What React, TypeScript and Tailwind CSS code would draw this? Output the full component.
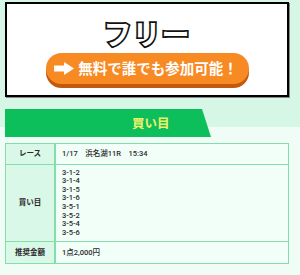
export default function App() {
  const picks = ["3-1-2", "3-1-4", "3-1-5", "3-1-6", "3-5-1", "3-5-2", "3-5-4", "3-5-6"];

  return (
    <div className="h-[275px] w-[300px] overflow-hidden bg-[linear-gradient(to_bottom,#d6f7e5_127px,#effdf6_127px)] font-['Roboto','Noto_Sans_CJK_JP',sans-serif] text-[#333]">
      {/* free plan banner */}
      <div className="ml-[5px] mt-[2px] flex h-[95px] w-[284px] flex-col items-center border-2 border-black bg-white shadow-[1px_1px_0_#888]">
        <p className="mt-[12px] font-['Noto_Sans_CJK_JP',sans-serif] text-[28px] font-bold leading-[34px] tracking-[1px] text-white [-webkit-text-stroke:3.5px_#111] [paint-order:stroke_fill]">
          フリー
        </p>
        <a
          href="#join"
          className="mt-[3px] flex h-[31px] w-[203px] items-center justify-center gap-[4px] rounded-full bg-[#f78a22] pr-[2px] shadow-[0_4px_0_#c2590f] font-['Noto_Sans_CJK_JP',sans-serif] text-[14.5px] font-bold leading-none text-white"
        >
          <svg width="20" height="13" viewBox="0 0 20 13" className="shrink-0">
            <path d="M0 3.5h10V0l10 6.5L10 13V9.5H0z" fill="#fff" />
          </svg>
          無料で誰でも参加可能！
        </a>
      </div>

      {/* section heading */}
      <div className="ml-[5px] mt-[12px] flex h-[28px] w-[206px] items-center bg-[#0dbf5b] pl-[127px] font-['Noto_Sans_CJK_JP',sans-serif] text-[12.5px] font-bold text-[#eef36a] [clip-path:polygon(0_0,197px_0,100%_100%,0_100%)]">
        買い目
      </div>

      {/* pick table */}
      <div className="ml-[5px] mt-[6px] grid w-[284px] grid-cols-[50px_1fr] border border-[#84dea9] text-[7.5px] text-[#2a2a2a]">
        <div className="flex h-[21px] items-center justify-center border-b border-r-2 border-[#84dea9] bg-[#d9f8e7] font-bold">レース</div>
        <div className="flex h-[21px] items-center border-b border-[#84dea9] bg-[#f2fff9] pl-[6px] font-medium">1/17　浜名湖11R　15:34</div>

        <div className="flex h-[77px] items-center justify-center border-b border-r-2 border-[#84dea9] bg-[#d9f8e7] font-bold">買い目</div>
        <div className="flex h-[77px] flex-col justify-center border-b border-[#84dea9] bg-[#f2fff9] pl-[6px] font-medium leading-[8.6px]">
          {picks.map((p) => (
            <span key={p}>{p}</span>
          ))}
        </div>

        <div className="flex h-[21px] items-center justify-center border-r-2 border-[#84dea9] bg-[#d9f8e7] font-bold">推奨金額</div>
        <div className="flex h-[21px] items-center bg-[#f2fff9] pl-[6px] font-medium">1点2,000円</div>
      </div>
    </div>
  );
}
